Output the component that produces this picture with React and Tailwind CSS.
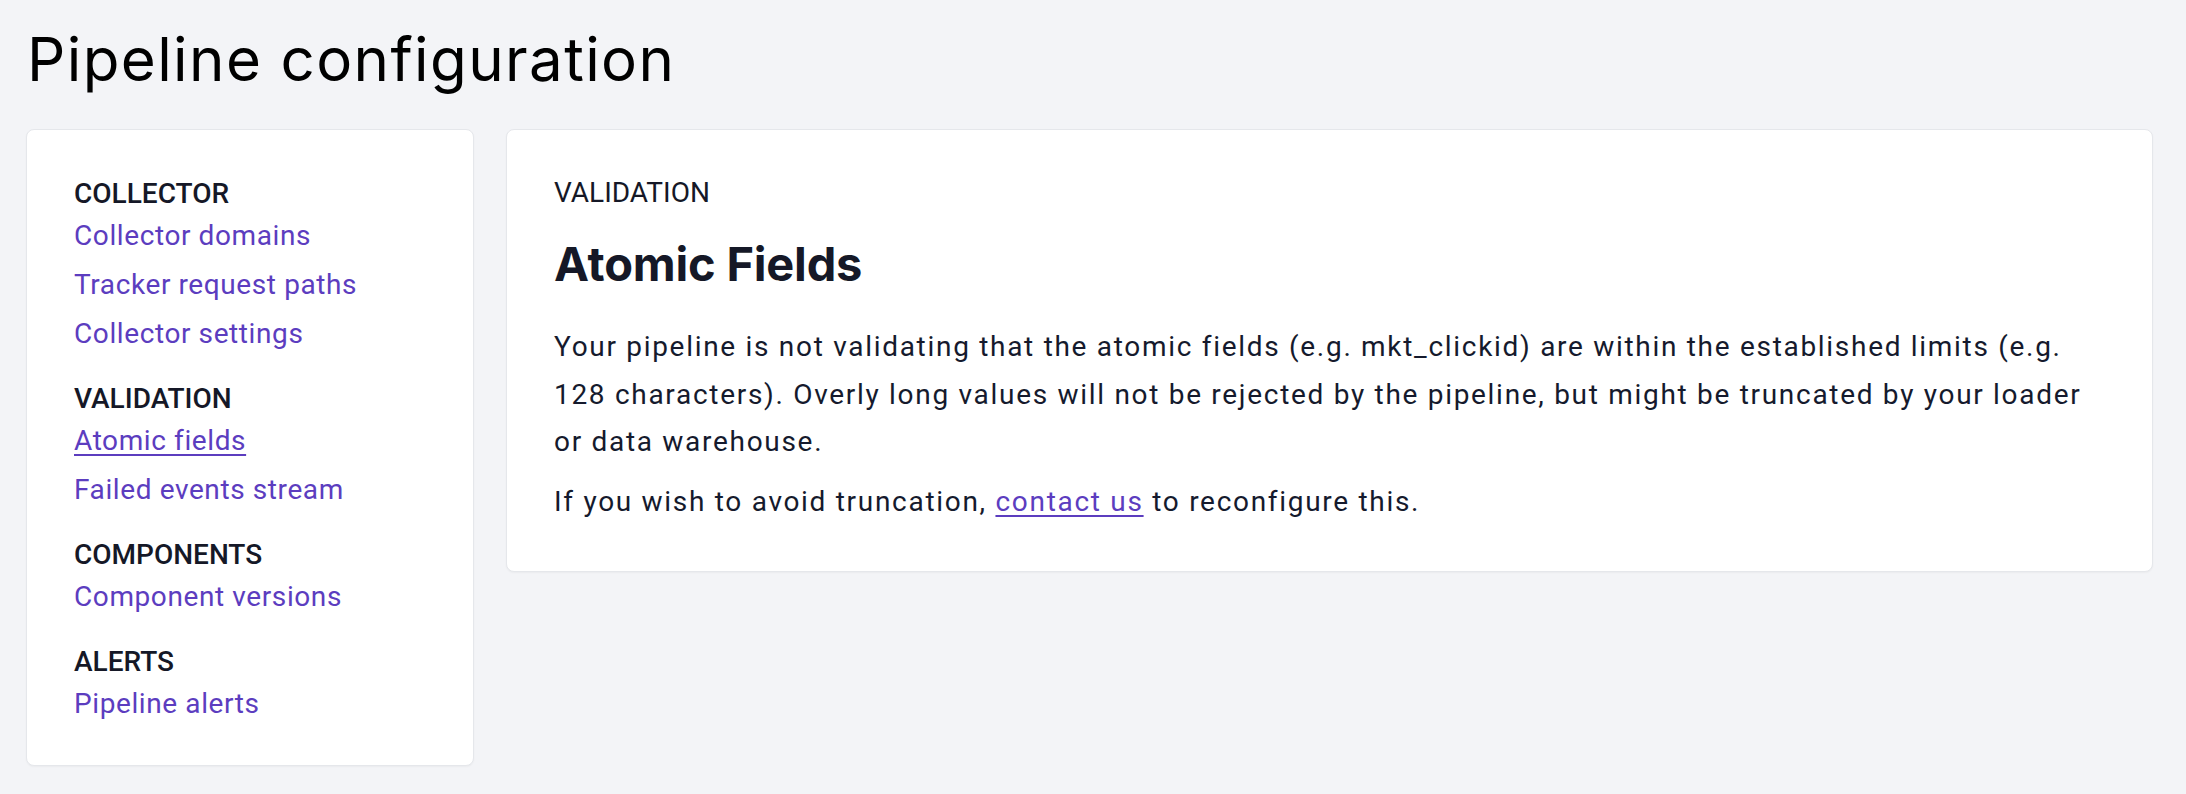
import React from "react";

const roboto = { fontFamily: "Roboto, 'Noto Sans', sans-serif" };

function NavSection({ title, links, first }) {
  return (
    <div className={first ? "" : "mt-[23px]"}>
      <div className="text-[28px] leading-[35px] font-medium text-[#151827]">{title}</div>
      {links.map((l) => (
        <a
          key={l.label}
          href="#"
          className={
            "block text-[28px] leading-[49px] tracking-[0.6px] text-[#5c3dbf] w-fit " +
            (l.active ? "underline decoration-[2px] underline-offset-[4px]" : "no-underline")
          }
        >
          {l.label}
        </a>
      ))}
    </div>
  );
}

export default function App() {
  return (
    <div
      className="min-h-screen w-full bg-[#f3f4f7] pl-[26px] pr-[33px] pt-[23px] pb-[28px] font-['Roboto',sans-serif]"
      style={roboto}
    >
      <h1 className="pl-[1px] text-[60px] leading-[72px] font-normal text-black font-['Inter',sans-serif] tracking-[1.4px]">
        Pipeline configuration
      </h1>
      <div className="mt-[34px] flex items-start gap-[32px]">
        <aside className="w-[448px] shrink-0 rounded-lg border border-[#e5e7eb] bg-white pl-[47px] pr-[24px] pt-[46px] pb-[37px] shadow-[0_1px_2px_rgba(0,0,0,0.04)]">
          <NavSection
            first
            title="COLLECTOR"
            links={[
              { label: "Collector domains" },
              { label: "Tracker request paths" },
              { label: "Collector settings" },
            ]}
          />
          <NavSection
            title="VALIDATION"
            links={[{ label: "Atomic fields", active: true }, { label: "Failed events stream" }]}
          />
          <NavSection title="COMPONENTS" links={[{ label: "Component versions" }]} />
          <NavSection title="ALERTS" links={[{ label: "Pipeline alerts" }]} />
        </aside>
        <main className="flex-1 rounded-lg border border-[#e5e7eb] bg-white pl-[47px] pr-[48px] pt-[45px] pb-[46px] shadow-[0_1px_2px_rgba(0,0,0,0.04)]">
          <div className="text-[28px] leading-[35px] font-normal text-[#151827]">VALIDATION</div>
          <h2 className="mt-[25px] text-[47px] leading-[57px] font-bold text-[#151827] font-['Inter',sans-serif] tracking-[-0.2px]">
            Atomic Fields
          </h2>
          <p className="mt-[31px] text-[28px] leading-[47.5px] tracking-[1.7px] text-[#151a2d]">
            Your pipeline is not validating that the atomic fields (e.g. mkt_clickid) are within the
            established limits (e.g. 128 characters). Overly long values will not be rejected by the
            pipeline, but might be truncated by your loader or data warehouse.
          </p>
          <p className="mt-[12px] text-[28px] leading-[47.5px] tracking-[1.7px] text-[#151a2d]">
            If you wish to avoid truncation,{" "}
            <a href="#" className="text-[#5c3dbf] underline decoration-[2px] underline-offset-[4px]">
              contact us
            </a>{" "}
            to reconfigure this.
          </p>
        </main>
      </div>
    </div>
  );
}
